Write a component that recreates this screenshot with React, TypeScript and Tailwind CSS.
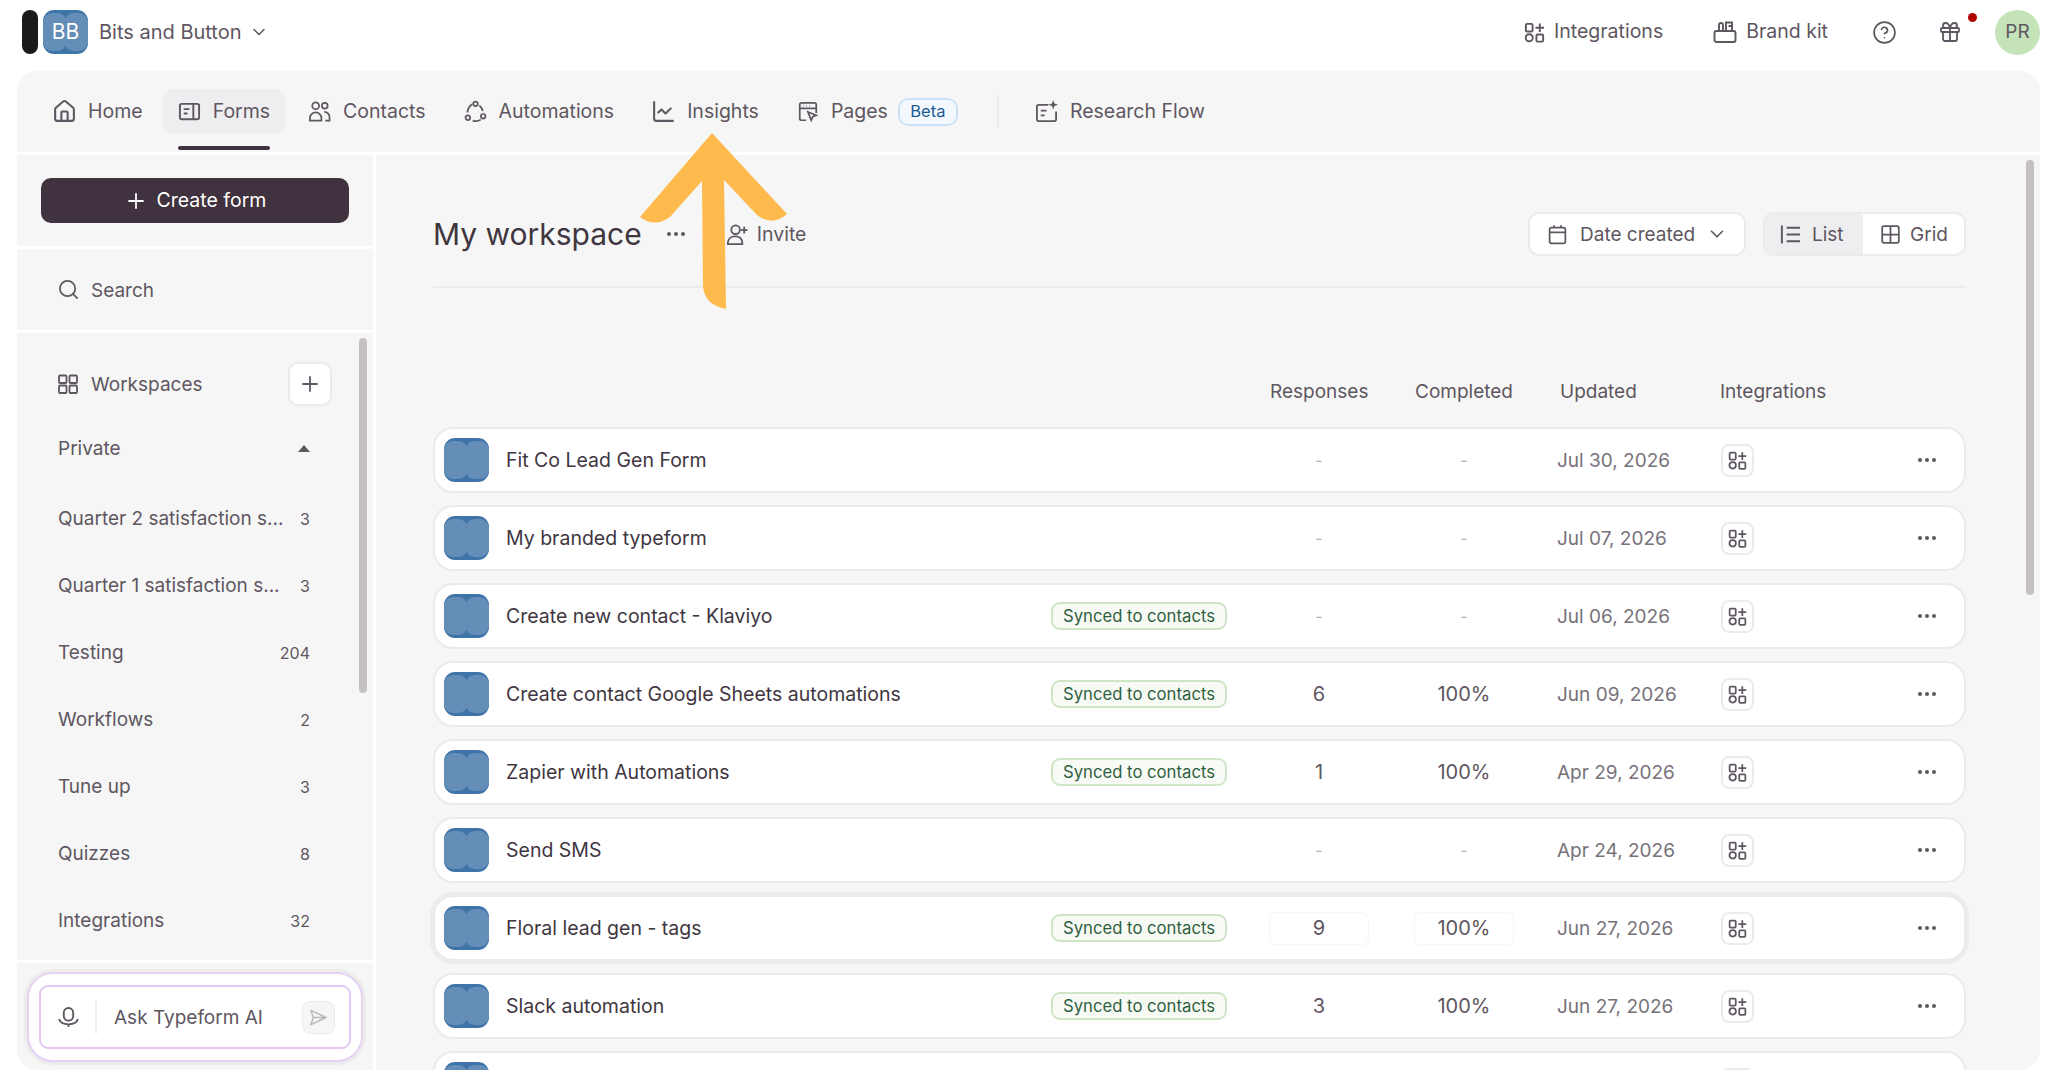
import React from "react";
import { ChartLine, ChevronDown, CircleHelp, Gift, House, Plus, Search } from "lucide-react";

type IconProps = { className?: string };

// Rounded two-lobe thumbnail used for the logo and each form
const Thumb = ({ className }: IconProps) => (
  <svg viewBox="0 0 45 44" className={className}>
    <rect width="45" height="44" rx="11" fill="#3f74a8" />
    <rect x="0" y="3" width="23.5" height="38" rx="9" fill="#648db8" />
    <rect x="21.5" y="3" width="23.5" height="38" rx="9" fill="#648db8" />
  </svg>
);

const IntegrationsIcon = ({ className }: IconProps) => (
  <svg viewBox="0 0 24 24" fill="none" stroke="currentColor" strokeWidth="2" className={className}>
    <rect x="3" y="3" width="7" height="8" rx="1.2" />
    <path d="M17.5 2.5v9M13 7h9" />
    <circle cx="6.5" cy="17.5" r="3.7" />
    <rect x="14" y="14" width="7" height="7.5" rx="1.2" />
  </svg>
);

const FormsIcon = ({ className }: IconProps) => (
  <svg viewBox="0 0 24 24" fill="none" stroke="currentColor" strokeWidth="2" className={className}>
    <rect x="2" y="4" width="20" height="16" rx="2" />
    <path d="M16 4v16M6 9.5h6M6 14h4" />
  </svg>
);

const ContactsIcon = ({ className }: IconProps) => (
  <svg viewBox="0 0 24 24" fill="none" stroke="currentColor" strokeWidth="1.8" className={className}>
    <circle cx="8" cy="6" r="3.6" />
    <circle cx="17.5" cy="6" r="3" />
    <path d="M2 21.5v-2.5a6 6 0 0 1 12 0v2.5zM17 12.5a5.5 5.5 0 0 1 5.5 6v3H18" />
  </svg>
);

const AutomationsIcon = ({ className }: IconProps) => (
  <svg viewBox="0 0 24 24" fill="none" stroke="currentColor" strokeWidth="1.8" className={className}>
    <circle cx="12" cy="4" r="2.4" />
    <circle cx="4" cy="18.5" r="2.4" />
    <circle cx="20" cy="17" r="2.4" />
    <path d="M8.5 4.5C5.5 6.5 3.8 9.5 3.6 13M16 5.5c1.8 1.6 3 3.6 3.6 6M17.5 20.5c-2.5 1.6-5.5 2-8.5 1" />
  </svg>
);

const PagesIcon = ({ className }: IconProps) => (
  <svg viewBox="0 0 24 24" fill="none" stroke="currentColor" strokeWidth="1.9" className={className}>
    <path d="M10 21H5a2 2 0 0 1-2-2V4a2 2 0 0 1 2-2h14a2 2 0 0 1 2 2v9" />
    <path d="M3 8h18M6.5 5h.5M10 5h.5M13.5 5h.5" />
    <path d="M12 12l9 3.5-3.8 1.7-1.7 3.8z" />
  </svg>
);

const ResearchIcon = ({ className }: IconProps) => (
  <svg viewBox="0 0 24 24" fill="none" stroke="currentColor" strokeWidth="1.9" className={className}>
    <path d="M14 5H4a2 2 0 0 0-2 2v13a2 2 0 0 0 2 2h16a2 2 0 0 0 2-2v-8" />
    <path d="M6 11h6M6 16h4" />
    <path d="M19 0l1.3 3.7L24 5l-3.7 1.3L19 10l-1.3-3.7L14 5l3.7-1.3z" fill="currentColor" stroke="none" />
  </svg>
);

const BrandKitIcon = ({ className }: IconProps) => (
  <svg viewBox="0 0 24 24" fill="none" stroke="currentColor" strokeWidth="1.9" className={className}>
    <rect x="1.5" y="11" width="21" height="11" rx="2" />
    <path d="M6 11V5a2 2 0 0 1 4 0v6M13 11V2.5h6V11M15.5 6H19" />
  </svg>
);

const InviteIcon = ({ className }: IconProps) => (
  <svg viewBox="0 0 24 24" fill="none" stroke="currentColor" strokeWidth="1.9" className={className}>
    <circle cx="10" cy="7" r="4.5" />
    <path d="M2 22v-2a7 7 0 0 1 7-6h2a7 7 0 0 1 6 6v2zM19 4v7M15.5 7.5h7" />
  </svg>
);

const CalendarIcon = ({ className }: IconProps) => (
  <svg viewBox="0 0 24 24" fill="none" stroke="currentColor" strokeWidth="2" className={className}>
    <rect x="3" y="4" width="18" height="18" rx="2" />
    <path d="M3 9.5h18M8 1.5V4M16 1.5V4" />
  </svg>
);

const ListIcon = ({ className }: IconProps) => (
  <svg viewBox="0 0 24 24" fill="none" stroke="currentColor" strokeWidth="2" className={className}>
    <path d="M3 2.5v19M8 5h14M8 12h14M8 19h14" />
  </svg>
);

const GridIcon = ({ className }: IconProps) => (
  <svg viewBox="0 0 24 24" fill="none" stroke="currentColor" strokeWidth="2" className={className}>
    <rect x="2.5" y="2.5" width="19" height="19" rx="2" />
    <path d="M12 2.5v19M2.5 12h19" />
  </svg>
);

const WorkspacesIcon = ({ className }: IconProps) => (
  <svg viewBox="0 0 20 20" fill="none" stroke="currentColor" strokeWidth="1.8" className={className}>
    <rect x="1" y="1.5" width="7.5" height="7.5" rx="1" />
    <rect x="11.5" y="1.5" width="7.5" height="7.5" rx="1" />
    <rect x="1" y="11.5" width="7.5" height="7.5" rx="1" />
    <rect x="11.5" y="11.5" width="7.5" height="7.5" rx="1" />
  </svg>
);

const MicIcon = ({ className }: IconProps) => (
  <svg viewBox="0 0 20 20" fill="none" stroke="currentColor" strokeWidth="1.8" className={className}>
    <rect x="5.5" y="1" width="9" height="12" rx="4.5" />
    <path d="M1 11.5c1 3 4.5 5 9 5s8-2 9-5M10 16.5V19" />
  </svg>
);

const SendIcon = ({ className }: IconProps) => (
  <svg viewBox="0 0 20 20" fill="none" stroke="currentColor" strokeWidth="1.5" strokeLinejoin="round" className={className}>
    <path d="M2 2.5l16 7.5-16 7.5 2.5-7.5zM4.5 10H18" />
  </svg>
);

const Dots = () => (
  <div className="flex gap-[3px]">
    <span className="size-[4px] rounded-full bg-[#5e5660]" />
    <span className="size-[4px] rounded-full bg-[#5e5660]" />
    <span className="size-[4px] rounded-full bg-[#5e5660]" />
  </div>
);

const navItems = [
  { label: "Home", icon: House, iconClass: "-mx-[1px] size-[25px]", tabClass: "pl-[16px] pr-[13px]" },
  { label: "Forms", icon: FormsIcon, iconClass: "size-[23px]", tabClass: "px-[16px]", active: true },
  { label: "Contacts", icon: ContactsIcon, iconClass: "size-[23px]", tabClass: "px-[16px]" },
  { label: "Automations", icon: AutomationsIcon, iconClass: "size-[23px]", tabClass: "px-[16px]" },
  { label: "Insights", icon: ChartLine, iconClass: "-mx-[1px] size-[25px]", tabClass: "px-[16px]" },
];

const folders = [
  { name: "Quarter 2 satisfaction s...", count: "3" },
  { name: "Quarter 1 satisfaction s...", count: "3" },
  { name: "Testing", count: "204" },
  { name: "Workflows", count: "2" },
  { name: "Tune up", count: "3" },
  { name: "Quizzes", count: "8" },
  { name: "Integrations", count: "32" },
];

const forms = [
  { title: "Fit Co Lead Gen Form", synced: false, responses: "-", completed: "-", updated: "Jul 30, 2026" },
  { title: "My branded typeform", synced: false, responses: "-", completed: "-", updated: "Jul 07, 2026" },
  { title: "Create new contact - Klaviyo", synced: true, responses: "-", completed: "-", updated: "Jul 06, 2026" },
  { title: "Create contact Google Sheets automations", synced: true, responses: "6", completed: "100%", updated: "Jun 09, 2026" },
  { title: "Zapier with Automations", synced: true, responses: "1", completed: "100%", updated: "Apr 29, 2026" },
  { title: "Send SMS", synced: false, responses: "-", completed: "-", updated: "Apr 24, 2026" },
  { title: "Floral lead gen - tags", synced: true, responses: "9", completed: "100%", updated: "Jun 27, 2026", hovered: true },
  { title: "Slack automation", synced: true, responses: "3", completed: "100%", updated: "Jun 27, 2026" },
  { title: "", synced: false, responses: "", completed: "", updated: "" },
];

function Metric({ value, hovered }: { value: string; hovered?: boolean }) {
  return (
    <div
      className={`flex h-[31px] w-[98px] items-center justify-center rounded-md ${
        hovered ? "outline outline-[#f6f6f6]" : ""
      } ${value === "-" ? "text-[16px] text-[#b5b2b6]" : "text-[20px] text-[#5e5660]"}`}
    >
      {value}
    </div>
  );
}

function FormRow({ form }: { form: (typeof forms)[number] }) {
  return (
    <div
      className={`flex h-[66px] shrink-0 items-center rounded-[20px] border-2 border-[#ebebeb] bg-white pl-[9px] pr-[28px] ${
        form.hovered ? "shadow-[0_0_0_3px_#ececec]" : ""
      }`}
    >
      <Thumb className="h-[44px] w-[45px] shrink-0" />
      <div className="ml-[17px] w-[545px] shrink-0 pt-[2px] text-[19.5px] text-[#40363f]">{form.title}</div>
      <div className="w-[176px] shrink-0">
        {form.synced && (
          <span className="flex h-[28px] items-center justify-center rounded-[9px] border-2 border-[#cfe6c6] bg-[#f8faf6] pt-[1px] text-[16.7px] text-[#2f5f41]">
            Synced to contacts
          </span>
        )}
      </div>
      <div className="ml-[43px] shrink-0">
        <Metric value={form.responses} hovered={form.hovered} />
      </div>
      <div className="ml-[47px] shrink-0">
        <Metric value={form.completed} hovered={form.hovered} />
      </div>
      <div className="ml-[44px] w-[164px] shrink-0 pt-[2px] text-[19px] text-[#77727a]">{form.updated}</div>
      <div className="flex h-[33px] w-[33px] shrink-0 items-center justify-center rounded-[8px] border-2 border-[#ebebeb] text-[#5e5660]">
        <IntegrationsIcon className="size-[21px]" />
      </div>
      <div className="flex flex-1 justify-end">
        <Dots />
      </div>
    </div>
  );
}

export default function App() {
  return (
    <div className="relative flex h-[1073px] w-[2048px] flex-col overflow-hidden bg-white font-['Inter',sans-serif] text-[#5e5660]">
      {/* Top bar */}
      <header className="flex h-[71px] shrink-0 items-center justify-between pb-[7px] pl-[22px] pr-[8px]">
        <div className="flex items-center">
          <div className="h-[44px] w-[16px] rounded-full bg-[#1a1a1a]" />
          <div className="relative ml-[5px] flex h-[44px] w-[45px] items-center justify-center">
            <Thumb className="absolute inset-0 h-full w-full" />
            <span className="relative text-[21px] text-white">BB</span>
          </div>
          <span className="ml-[11px] text-[20px]">Bits and Button</span>
          <ChevronDown className="ml-[7px] size-[20px]" strokeWidth={1.8} />
        </div>
        <div className="flex items-center">
          <IntegrationsIcon className="size-[23px]" />
          <span className="ml-[8px] text-[19.5px]">Integrations</span>
          <BrandKitIcon className="ml-[50px] size-[24px]" />
          <span className="ml-[9px] text-[19.5px]">Brand kit</span>
          <CircleHelp className="ml-[44px] size-[25px]" strokeWidth={1.6} />
          <div className="relative ml-[41px]">
            <Gift className="size-[24px]" strokeWidth={1.8} />
            <span className="absolute -right-[15px] -top-[7px] size-[9px] rounded-full bg-[#b00000]" />
          </div>
          <div className="ml-[33px] flex size-[45px] items-center justify-center rounded-full bg-[#c5e3b8] text-[19px]">
            PR
          </div>
        </div>
      </header>

      {/* Main panel */}
      <div className="ml-[17px] mr-[8px] flex h-[999px] shrink-0 flex-col gap-[3px] overflow-hidden rounded-[20px]">
        <nav className="flex h-[81px] shrink-0 items-start gap-[6px] bg-[#f6f6f6] pl-[20px] pt-[18px] text-[19.5px]">
          {navItems.map((item) => (
            <div key={item.label} className="relative">
              <div
                className={`flex h-[45px] items-center gap-[12px] rounded-[12px] ${item.tabClass} ${
                  item.active ? "bg-[#eeeef0]" : ""
                }`}
              >
                <item.icon className={item.iconClass} />
                <span>{item.label}</span>
              </div>
              {item.active && (
                <div className="absolute left-[16px] right-[16px] top-[57px] h-[4px] rounded-full bg-[#40323e]" />
              )}
            </div>
          ))}
          <div className="flex h-[45px] items-center gap-[12px] px-[16px]">
            <PagesIcon className="size-[22px]" />
            <span className="mr-[-2px]">Pages</span>
            <span className="flex h-[28px] w-[60px] items-center justify-center rounded-[10px] border-2 border-[#c9e2f8] bg-[#f2f8fd] text-[16.5px] text-[#1c5a94]">
              Beta
            </span>
          </div>
          <div className="ml-[17px] mt-[6px] h-[33px] w-[2px] bg-[#ececee]" />
          <div className="ml-[14px] flex h-[45px] items-center gap-[12px] px-[16px]">
            <ResearchIcon className="size-[23px]" />
            <span>Research Flow</span>
          </div>
        </nav>

        <div className="flex min-h-0 flex-1 gap-[3px]">
          {/* Sidebar */}
          <aside className="flex w-[356px] shrink-0 flex-col gap-[3px] text-[19px]">
            <div className="h-[91px] shrink-0 bg-[#f6f6f6] px-[24px] pt-[23px]">
              <div className="flex h-[45px] items-center justify-center gap-[9px] rounded-[10px] bg-[#40323e] text-[19.5px] text-white">
                <Plus className="size-[24px]" strokeWidth={1.8} />
                <span className="pt-[1px]">Create form</span>
              </div>
            </div>
            <div className="flex h-[81px] shrink-0 items-center gap-[11px] bg-[#f6f6f6] pl-[40px]">
              <Search className="size-[23px]" strokeWidth={1.8} />
              <span className="pt-[3px]">Search</span>
            </div>
            <div className="relative h-[627px] shrink-0 overflow-hidden bg-[#f6f6f6] pl-[41px] pr-[41px] pt-[29px]">
              <div className="flex h-[44px] items-center">
                <WorkspacesIcon className="size-[20px]" />
                <span className="ml-[13px] flex-1 pt-[2px]">Workspaces</span>
                <div className="flex size-[44px] items-center justify-center rounded-[10px] border-2 border-[#ebebeb] bg-white">
                  <Plus className="size-[24px]" strokeWidth={1.8} />
                </div>
              </div>
              <div className="mb-[15px] mt-[20px] flex h-[44px] items-center justify-between pr-[22px]">
                <span className="pt-[2px]">Private</span>
                <span className="h-0 w-0 border-x-[6px] border-b-[7px] border-x-transparent border-b-[#5e5660]" />
              </div>
              {folders.map((folder) => (
                <div key={folder.name} className="flex h-[67px] items-center justify-between pr-[22px]">
                  <span className="pt-[2px]">{folder.name}</span>
                  <span className="text-[16px]">{folder.count}</span>
                </div>
              ))}
              <div className="absolute right-[6px] top-[5px] h-[355px] w-[8px] rounded-full bg-[#c4c0c4]" />
            </div>
            <div className="min-h-0 flex-1 bg-[#f6f6f6] px-[10px] pt-[9px]">
              <div className="rounded-[26px] border-2 border-[#e6d2f2] bg-white px-[10px] py-[11px] shadow-[0_0_0_3px_#ececec]">
                <div className="flex h-[64px] items-center rounded-[9px] border-2 border-[#e3c9f0] pl-[17px] pr-[14px]">
                  <MicIcon className="size-[21px] shrink-0" />
                  <div className="ml-[16px] h-[33px] w-[2px] bg-[#f0f0f0]" />
                  <span className="ml-[17px] flex-1 pt-[2px]">Ask Typeform AI</span>
                  <div className="flex size-[33px] items-center justify-center rounded-[8px] border border-[#ebebeb] bg-[#f6f6f6] text-[#b9b6ba]">
                    <SendIcon className="size-[19px]" />
                  </div>
                </div>
              </div>
            </div>
          </aside>

          {/* Workspace content */}
          <main className="relative flex min-w-0 flex-1 flex-col overflow-hidden bg-[#f6f6f6] pl-[57px] pr-[74px] pt-[57px]">
            <div className="flex h-[44px] shrink-0 items-center">
              <h1 className="text-[30px] leading-none text-[#40363f]">My workspace</h1>
              <div className="ml-[25px]">
                <Dots />
              </div>
              <InviteIcon className="ml-[41px] size-[23px]" />
              <span className="ml-[8px] pt-[2px] text-[19.5px]">Invite</span>
              <div className="ml-auto flex h-[44px] w-[218px] items-center rounded-[11px] border-2 border-[#ebebeb] bg-white pl-[17px] text-[19px]">
                <CalendarIcon className="size-[21px]" />
                <span className="ml-[12px] pt-[2px]">Date created</span>
                <ChevronDown className="ml-[11px] size-[22px]" strokeWidth={1.8} />
              </div>
              <div className="ml-[17px] flex h-[44px] w-[203px] overflow-hidden rounded-[11px] border-2 border-[#ebebeb] bg-white text-[19px]">
                <div className="flex w-[98px] items-center gap-[10px] bg-[#eeeef0] pl-[14px]">
                  <ListIcon className="size-[23px]" />
                  <span className="pt-[2px]">List</span>
                </div>
                <div className="flex flex-1 items-center gap-[9px] pl-[17px]">
                  <GridIcon className="size-[21px]" />
                  <span className="pt-[2px]">Grid</span>
                </div>
              </div>
            </div>
            <div className="mt-[30px] h-[2px] shrink-0 bg-[#ececee]" />
            <div className="mt-[87px] flex h-[34px] shrink-0 items-center text-[19px]">
              <span className="ml-[837px] w-[145px]">Responses</span>
              <span className="w-[145px]">Completed</span>
              <span className="w-[160px]">Updated</span>
              <span>Integrations</span>
            </div>
            <div className="mt-[18px] flex flex-col gap-[12px]">
              {forms.map((form, i) => (
                <FormRow key={i} form={form} />
              ))}
            </div>
            <div className="absolute right-[6px] top-[5px] h-[435px] w-[8px] rounded-full bg-[#c4c0c4]" />
          </main>
        </div>
      </div>

      {/* Hand-drawn arrow annotation */}
      <svg viewBox="636 130 155 182" className="pointer-events-none absolute left-[636px] top-[130px] h-[182px] w-[155px]">
        <path
          d="M712 133 L640 217 Q655 228 670 217 L702 181 L703 287 Q705 305 726 309 L724 180 L757 215 Q772 227 787 214 Z"
          fill="#ffba4d"
        />
      </svg>
    </div>
  );
}
